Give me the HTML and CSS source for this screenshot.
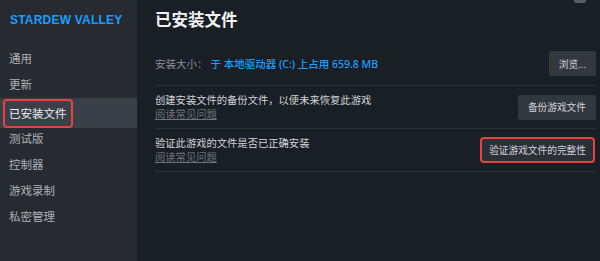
FILE: index.html
```html
<!DOCTYPE html>
<html lang="zh-CN">
<head>
<meta charset="utf-8">
<link rel="stylesheet" href="styles.css">
</head>
<body>
<div class="app">
  <aside class="sidebar">
    <div class="game">STARDEW VALLEY</div>
    <nav class="nav">
      <div class="nav-item">通用</div>
      <div class="nav-item">更新</div>
      <div class="nav-item active"><span class="mark">已安装文件</span></div>
      <div class="nav-item">测试版</div>
      <div class="nav-item">控制器</div>
      <div class="nav-item">游戏录制</div>
      <div class="nav-item">私密管理</div>
    </nav>
  </aside>
  <main class="main">
    <div class="topnub"></div>
    <h1 class="title">已安装文件</h1>
    <div class="row size-row">
      <div class="size"><span class="label">安装大小：</span><span class="value">于 本地驱动器 (C:) 上占用 659.8 MB</span></div>
      <button class="btn">浏览...</button>
    </div>
    <div class="row">
      <div class="desc">
        <div class="text">创建安装文件的备份文件，以便未来恢复此游戏</div>
        <a class="faq">阅读常见问题</a>
      </div>
      <button class="btn">备份游戏文件</button>
    </div>
    <div class="row">
      <div class="desc">
        <div class="text">验证此游戏的文件是否已正确安装</div>
        <a class="faq">阅读常见问题</a>
      </div>
      <button class="btn marked">验证游戏文件的完整性</button>
    </div>
  </main>
</div>
</body>
</html>
```
FILE: styles.css
```css
* { box-sizing: border-box; }
html, body { margin: 0; padding: 0; }
body {
  width: 600px;
  height: 261px;
  overflow: hidden;
  background: #1a1e25;
  font-family: "Noto Sans", "Noto Sans CJK SC", sans-serif;
  color: #c9ccd0;
}
.app {
  display: flex;
  height: 261px;
}
.sidebar {
  width: 137px;
  flex: none;
  background: #272a30;
  padding-top: 10px;
}
.game {
  padding-left: 10px;
  font-family: "Liberation Sans", "Noto Sans", sans-serif;
  font-weight: bold;
  font-size: 12px;
  letter-spacing: 0.2px;
  color: #1a9fff;
  line-height: 20px;
  height: 20px;
}
.nav {
  margin-top: 16px;
  display: flex;
  flex-direction: column;
}
.nav-item {
  height: 26px;
  line-height: 26px;
  padding-left: 9px;
  font-size: 11.5px;
  color: #aeb2b7;
}
.nav-item.active {
  background: #3b3f47;
  color: #eef0f2;
  height: 30px;
  line-height: 28px;
  padding-left: 3px;
  margin: 0 0 -2px;
  display: flex;
  align-items: center;
}
.mark {
  display: inline-block;
  border: 2px solid #e8413f;
  border-radius: 4px;
  padding: 0 4px;
  height: 29px;
  line-height: 25px;
}
.main {
  flex: 1;
  position: relative;
  padding: 9px 4px 0 18px;
}
.topnub {
  position: absolute;
  top: 0;
  right: 14px;
  width: 12px;
  height: 3px;
  background: #5a5f66;
  border-radius: 0 0 2px 2px;
}
.title {
  margin: 0;
  font-size: 16.5px;
  font-weight: bold;
  color: #f2f3f5;
  line-height: 22px;
}
.row {
  display: flex;
  align-items: center;
  justify-content: space-between;
  border-bottom: 1px solid #2c323b;
  height: 43px;
}
.size-row {
  margin-top: 13px;
  height: 42px;
  padding-bottom: 2px;
}
.size { font-size: 10.5px; }
.label { color: #8b9097; margin-right: 3px; }
.value { color: #1a9fff; font-weight: 500; }
.desc {
  display: flex;
  flex-direction: column;
  font-size: 10.3px;
  line-height: 14px;
}
.text { color: #d2d5d8; }
.faq {
  color: #6d737a;
  text-decoration: underline;
}
.btn {
  font-family: inherit;
  font-size: 9.7px;
  color: #d0d3d6;
  background: #33373e;
  border: none;
  border-radius: 2px;
  height: 25px;
  padding: 0 10px;
}
.btn.marked {
  background: #2b2f36;
  border: 2px solid #e8413f;
  border-radius: 4px;
  height: 26px;
  padding: 0 7px;
  margin-right: 1px;
}
```
